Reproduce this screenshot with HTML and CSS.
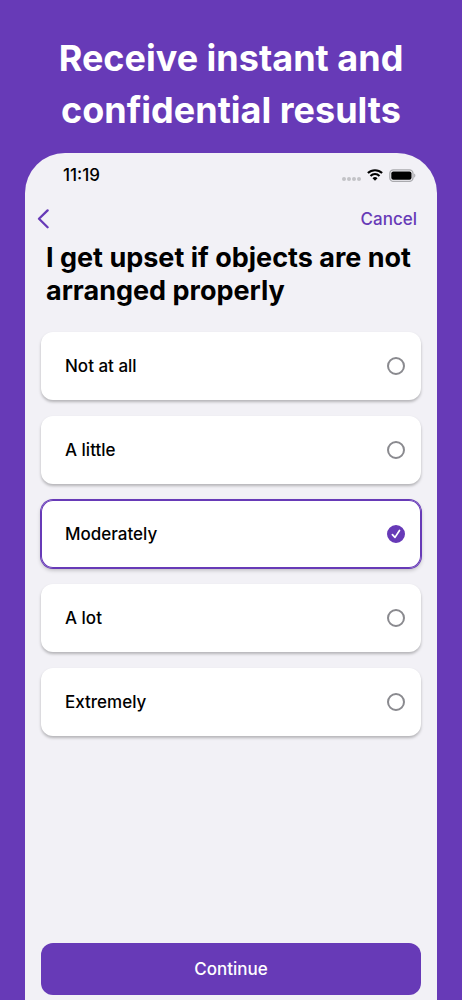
FILE: index.html
```html
<!DOCTYPE html>
<html lang="en">
<head>
<meta charset="utf-8">
<meta name="viewport" content="width=device-width, initial-scale=1">
<title>Receive instant and confidential results</title>
<link rel="stylesheet" href="styles.css">
</head>
<body>
<div class="page">
  <h1 class="headline">Receive instant and<br>confidential results</h1>
  <main class="phone">
    <div class="status">
      <span class="time">11:19</span>
      <span class="indicators">
        <svg class="dots" width="20" height="12" viewBox="0 0 20 12" fill="#c3c3c7" aria-hidden="true"><circle cx="3" cy="10" r="2"/><circle cx="8" cy="10" r="2"/><circle cx="13" cy="10" r="2"/><circle cx="18" cy="10" r="2"/></svg>
        <svg class="wifi" width="16" height="12" viewBox="0 0 16 12" aria-hidden="true"><path d="M.9 4.1a10.2 10.2 0 0 1 14.2 0M3.5 6.9a6.4 6.4 0 0 1 9 0" fill="none" stroke="#000" stroke-width="2.1"/><path d="M8 11.8 5.5 9.3a3.6 3.6 0 0 1 5 0z"/></svg>
        <svg class="battery" width="27" height="13" viewBox="0 0 27 13" aria-hidden="true"><rect x=".8" y=".8" width="23.2" height="11.6" rx="3.6" fill="none" stroke="#aaaaae" stroke-width="1.3"/><rect x="2.3" y="2.4" width="20.2" height="8.4" rx="2"/><path d="M25.2 4.5c1.6.7 1.6 3.5 0 4.2z" fill="#aaaaae"/></svg>
      </span>
    </div>
    <nav class="nav">
      <button class="back" type="button" aria-label="Back"><svg width="12" height="20" viewBox="0 0 12 20" aria-hidden="true"><path d="M10.6 1.4 2 9.8l8.6 8.4" fill="none" stroke="currentColor" stroke-width="2.3" stroke-linecap="round" stroke-linejoin="round"/></svg></button>
      <button class="cancel" type="button">Cancel</button>
    </nav>
    <form class="form">
      <fieldset class="question">
        <legend class="title">I get upset if objects are not arranged properly</legend>
        <div class="options">
          <label class="option"><span>Not at all</span><input class="radio" type="radio" name="answer"></label>
          <label class="option"><span>A little</span><input class="radio" type="radio" name="answer"></label>
          <label class="option"><span>Moderately</span><span class="mark"><input class="radio" type="radio" name="answer" checked><svg class="check" width="18" height="18" viewBox="0 0 18 18" aria-hidden="true"><path d="M5.4 9.6 8 12.4l4.5-6.9" fill="none" stroke="#fff" stroke-width="1.7" stroke-linecap="round" stroke-linejoin="round"/></svg></span></label>
          <label class="option"><span>A lot</span><input class="radio" type="radio" name="answer"></label>
          <label class="option"><span>Extremely</span><input class="radio" type="radio" name="answer"></label>
        </div>
      </fieldset>
      <button class="continue" type="button">Continue</button>
    </form>
  </main>
</div>
</body>
</html>
```
FILE: styles.css
```css
* {
  box-sizing: border-box;
}

body {
  margin: 0;
  background: #673ab7;
  color: #000;
  font-family: Inter, "Liberation Sans", sans-serif;
}

button {
  border: 0;
  padding: 0;
  background: none;
  font: inherit;
  cursor: pointer;
}

svg {
  display: block;
}

.page {
  display: flex;
  flex-direction: column;
  min-height: 100vh;
  padding: 32px 25px 0;
}

.headline {
  margin: 0 0 17px;
  color: #fff;
  font-size: 36px;
  font-weight: 700;
  line-height: 52px;
  text-align: center;
}

.phone {
  flex: 1;
  display: flex;
  flex-direction: column;
  padding: 12px 16px 5px;
  border-radius: 40px 40px 0 0;
  background: #f2f1f6;
}

.status {
  display: flex;
  align-items: center;
  justify-content: space-between;
  height: 20px;
  padding: 0 5px 0 22px;
}

.time {
  font-size: 17px;
  font-weight: 500;
  line-height: 20px;
}

.indicators {
  display: flex;
  align-items: center;
  gap: 6px;
}

.nav {
  display: flex;
  align-items: center;
  justify-content: space-between;
  height: 32px;
  margin-top: 18px;
  padding-right: 4px;
  color: #673ab7;
}

.back {
  margin-left: -4px;
  color: inherit;
}

.cancel {
  color: inherit;
  font-size: 17px;
  font-weight: 500;
  line-height: 24px;
}

.form {
  flex: 1;
  display: flex;
  flex-direction: column;
  justify-content: space-between;
  padding-top: 6px;
}

.question {
  min-width: 0;
  margin: 0;
  padding: 0;
  border: 0;
}

.title {
  padding: 0 5px;
  font-size: 27px;
  font-weight: 700;
  line-height: 33px;
}

.options {
  display: flex;
  flex-direction: column;
  gap: 16px;
  padding-top: 25px;
}

.option {
  display: flex;
  align-items: center;
  justify-content: space-between;
  height: 68px;
  padding: 0 16px 0 24px;
  border-radius: 12px;
  background: #fff;
  box-shadow: 0 2px 3px rgba(0, 0, 0, 0.26);
  font-size: 17px;
  font-weight: 500;
  line-height: 24px;
  cursor: pointer;
}

.option:has(:checked) {
  box-shadow: 0 0 0 1px #673ab7, inset 0 0 0 1px #673ab7, 0 2px 4px rgba(0, 0, 0, 0.26);
}

.mark {
  display: grid;
}

.radio {
  appearance: none;
  width: 18px;
  height: 18px;
  margin: 0;
  border: 2px solid #8a8a8f;
  border-radius: 50%;
}

.radio:checked {
  border-color: #673ab7;
  background: #673ab7;
}

.mark .radio,
.check {
  grid-area: 1 / 1;
}

.check {
  pointer-events: none;
}

.continue {
  height: 52px;
  border-radius: 12px;
  background: #673ab7;
  color: #fff;
  font-size: 17px;
  font-weight: 500;
}
```
